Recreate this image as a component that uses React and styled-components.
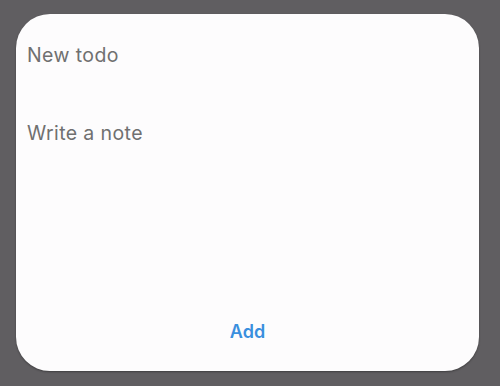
import styled, { createGlobalStyle } from 'styled-components';

const GlobalStyle = createGlobalStyle`
  html, body {
    margin: 0;
    padding: 0;
    background: #605e61;
  }
  body {
    font-family: Inter, Roboto, sans-serif;
  }
`;

const Screen = styled.div`
  width: 500px;
  height: 386px;
  padding: 14px 21px 15px 16px;
  box-sizing: border-box;
  background: #605e61;
`;

const Card = styled.form`
  height: 100%;
  background: #fdfcfd;
  border-radius: 34px;
  box-shadow: 0 1px 2px rgba(0, 0, 0, 0.35);
  display: flex;
  flex-direction: column;
  padding: 28px 11px 29px;
  box-sizing: border-box;
`;

const Field = styled.input`
  border: none;
  outline: none;
  background: transparent;
  font-family: Inter, Roboto, sans-serif;
  font-size: 19.5px;
  letter-spacing: 0.4px;
  color: #444;
  padding: 0;
  height: 26px;
  &::placeholder {
    color: #707070;
  }
`;

const Note = styled.textarea`
  border: none;
  outline: none;
  resize: none;
  background: transparent;
  font-family: Inter, Roboto, sans-serif;
  font-size: 19.5px;
  letter-spacing: 0.4px;
  line-height: 26px;
  color: #444;
  padding: 0;
  margin-top: 52px;
  flex: 1;
  &::placeholder {
    color: #707070;
  }
`;

const AddButton = styled.button`
  align-self: center;
  border: none;
  background: transparent;
  color: #3a8fde;
  font-family: Inter, Roboto, sans-serif;
  font-weight: 600;
  font-size: 18px;
  padding: 0;
  cursor: pointer;
`;

const App = () => {
  return (
    <>
      <GlobalStyle />
      <Screen>
        <Card onSubmit={(e) => e.preventDefault()}>
          <Field placeholder="New todo" />
          <Note placeholder="Write a note" />
          <AddButton type="submit">Add</AddButton>
        </Card>
      </Screen>
    </>
  );
};

export default App;
